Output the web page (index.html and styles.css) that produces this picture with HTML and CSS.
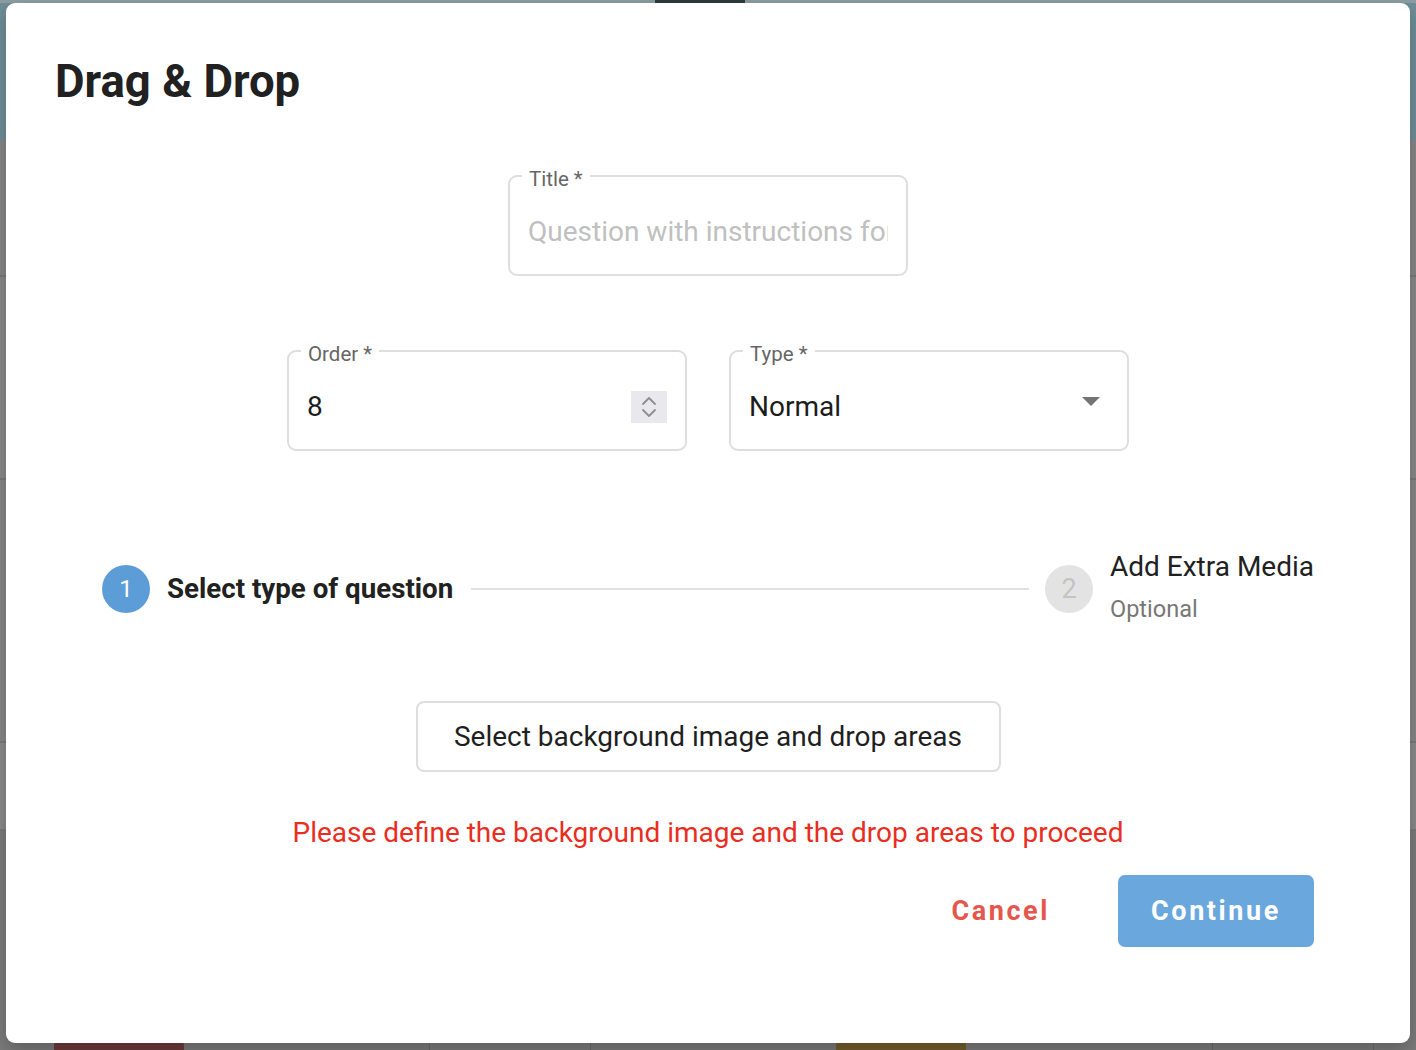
FILE: index.html
```html
<!DOCTYPE html>
<html lang="en">
<head>
<meta charset="utf-8">
<title>Drag &amp; Drop</title>
<link rel="stylesheet" href="styles.css">
</head>
<body>
<div class="page">
  <div class="topbar"><span class="tab-line"></span></div>
  <div class="bg-row bg-row-a"></div>
  <div class="bg-row bg-row-b"></div>
  <div class="bg-row bg-row-c"></div>
  <div class="bg-row bg-row-d"></div>
  <div class="bg-bottom">
    <span class="blob blob-red"></span>
    <span class="vline vl1"></span>
    <span class="vline vl2"></span>
    <span class="blob blob-olive"></span>
    <span class="vline vl3"></span>
    <span class="vline vl4"></span>
  </div>
</div>

<div class="modal">
  <h1 class="modal-title">Drag &amp; Drop</h1>

  <div class="field-row field-row-single">
    <div class="field">
      <span class="field-label">Title *</span>
      <span class="field-value placeholder">Question with instructions for students</span>
    </div>
  </div>

  <div class="field-row field-row-double">
    <div class="field">
      <span class="field-label">Order *</span>
      <span class="field-value">8</span>
      <span class="spinner">
        <svg width="16" height="26" viewBox="0 0 16 26" aria-hidden="true">
          <path d="M2 10 L8 4 L14 10" fill="none" stroke="#8d8d92" stroke-width="1.8" stroke-linecap="round" stroke-linejoin="round"/>
          <path d="M2 16 L8 22 L14 16" fill="none" stroke="#8d8d92" stroke-width="1.8" stroke-linecap="round" stroke-linejoin="round"/>
        </svg>
      </span>
    </div>
    <div class="field">
      <span class="field-label">Type *</span>
      <span class="field-value">Normal</span>
      <span class="caret"></span>
    </div>
  </div>

  <div class="stepper">
    <div class="step step-active">
      <span class="step-circle">1</span>
      <span class="step-label">Select type of question</span>
    </div>
    <span class="step-connector"></span>
    <div class="step step-idle">
      <span class="step-circle">2</span>
      <span class="step-text">
        <span class="step-label-plain">Add Extra Media</span>
        <span class="step-optional">Optional</span>
      </span>
    </div>
  </div>

  <div class="select-wrap">
    <button class="select-btn" type="button">Select background image and drop areas</button>
  </div>

  <p class="error">Please define the background image and the drop areas to proceed</p>

  <div class="actions">
    <button class="btn btn-cancel" type="button">Cancel</button>
    <button class="btn btn-continue" type="button">Continue</button>
  </div>
</div>
</body>
</html>
```

FILE: styles.css
```css
* { box-sizing: border-box; }

html, body {
  margin: 0;
  padding: 0;
}

body {
  width: 1416px;
  height: 1050px;
  overflow: hidden;
  position: relative;
  font-family: Roboto, "Noto Sans", "Liberation Sans", sans-serif;
  background: #858585;
}

/* ---------- dimmed page behind the dialog ---------- */
.page {
  display: flex;
  flex-direction: column;
  width: 1416px;
  height: 1050px;
}

.topbar {
  height: 140px;
  background: linear-gradient(#8c9ea3 0, #8c9ea3 3px, #6f8f98 3px);
  position: relative;
}

.tab-line {
  position: absolute;
  left: 655px;
  top: 0;
  width: 90px;
  height: 3px;
  background: #2e3a3d;
}

.bg-row {
  border-bottom: 2px solid #7a7a7a;
  background: #888888;
}

.bg-row-a { height: 137px; }
.bg-row-b { height: 203px; background: #8a8a8a; }
.bg-row-c { height: 263px; background: #888888; }
.bg-row-d { height: 88px; background: #8b8b8b; }

.bg-bottom {
  flex: 1;
  position: relative;
  background: #7c7c7c;
}

.blob {
  position: absolute;
  top: 180px;
  width: 130px;
  height: 70px;
  border-radius: 50% 50% 0 0;
}
.blob-red { left: 54px; background: #6e3b3d; }
.blob-olive { left: 836px; background: #74602d; }

.vline {
  position: absolute;
  top: 160px;
  bottom: 0;
  width: 1px;
  background: #6c6c6c;
}
.vl1 { left: 429px; }
.vl2 { left: 590px; }
.vl3 { left: 1212px; }
.vl4 { left: 1373px; }

/* ---------- dialog ---------- */
.modal {
  position: absolute;
  left: 6px;
  top: 3px;
  width: 1404px;
  height: 1040px;
  background: #ffffff;
  border-radius: 9px;
  box-shadow: 0 8px 20px rgba(0, 0, 0, 0.25);
  display: flex;
  flex-direction: column;
  padding: 52px 96px 0 96px;
}

.modal-title {
  margin: 0 0 0 -47px;
  font-size: 45.5px;
  line-height: 54px;
  font-weight: 700;
  color: #212121;
  letter-spacing: 0;
}

.field-row {
  display: flex;
  justify-content: center;
  gap: 42px;
}

.field-row-single { margin-top: 66px; }
.field-row-double { margin-top: 74px; }

.field {
  position: relative;
  width: 400px;
  height: 101px;
  border: 2px solid #dedede;
  border-radius: 9px;
  display: flex;
  align-items: center;
  padding: 13px 18px 0 18px;
}

.field-label {
  position: absolute;
  top: -9px;
  left: 12px;
  padding: 0 7px;
  background: #ffffff;
  font-size: 20.5px;
  line-height: 22px;
  color: #666666;
}

.field-value {
  flex: 1;
  min-width: 0;
  font-size: 28px;
  line-height: 36px;
  color: #1c1c1c;
  white-space: nowrap;
  overflow: hidden;
}

.field-value.placeholder {
  color: #c0c0c0;
  text-overflow: clip;
}

.spinner {
  width: 36px;
  height: 32px;
  background: #e9e9ed;
  display: flex;
  align-items: center;
  justify-content: center;
  flex: none;
}

.caret {
  width: 0;
  height: 0;
  border-left: 9px solid transparent;
  border-right: 9px solid transparent;
  border-top: 9px solid #747474;
  margin: -12px 9px 0 0;
  flex: none;
}

/* ---------- stepper ---------- */
.stepper {
  margin-top: 98px;
  display: flex;
  align-items: center;
}

.step {
  display: flex;
  align-items: center;
  gap: 17px;
}

.step-circle {
  width: 48px;
  height: 48px;
  border-radius: 50%;
  display: flex;
  align-items: center;
  justify-content: center;
  font-size: 24px;
  color: #ffffff;
  flex: none;
}

.step-active .step-circle { background: #5c9dd8; }
.step-idle .step-circle { background: #e3e3e3; color: #c4c4c4; font-size: 27px; }

.step-label {
  font-size: 27.7px;
  line-height: 36px;
  font-weight: 700;
  color: #212121;
}

.step-connector {
  flex: 1;
  height: 2px;
  background: #e0e0e0;
  margin: 0 16px 0 18px;
}

.step-text {
  display: flex;
  flex-direction: column;
  padding-bottom: 4px;
}

.step-label-plain {
  font-size: 28px;
  line-height: 36px;
  color: #212121;
}

.step-optional {
  margin-top: 9px;
  font-size: 23.5px;
  line-height: 30px;
  color: #777777;
}

/* ---------- select button ---------- */
.select-wrap {
  margin-top: 73px;
  display: flex;
  justify-content: center;
}

.select-btn {
  width: 585px;
  height: 71px;
  border: 2px solid #dedede;
  border-radius: 8px;
  background: #ffffff;
  font-family: inherit;
  font-size: 28px;
  color: #1f1f1f;
  padding: 0;
}

.error {
  margin: 43px 0 0 0;
  text-align: center;
  font-size: 28px;
  line-height: 36px;
  color: #ea2d21;
}

/* ---------- actions ---------- */
.actions {
  margin-top: 24px;
  display: flex;
  justify-content: flex-end;
  gap: 35px;
}

.btn {
  height: 72px;
  padding: 0 33px;
  border: none;
  border-radius: 7px;
  font-family: inherit;
  font-size: 27px;
  font-weight: 700;
  letter-spacing: 2.6px;
  background: transparent;
}

.btn-cancel { color: #e5574d; }

.btn-continue {
  background: #6aa7dd;
  color: #ffffff;
}
```
